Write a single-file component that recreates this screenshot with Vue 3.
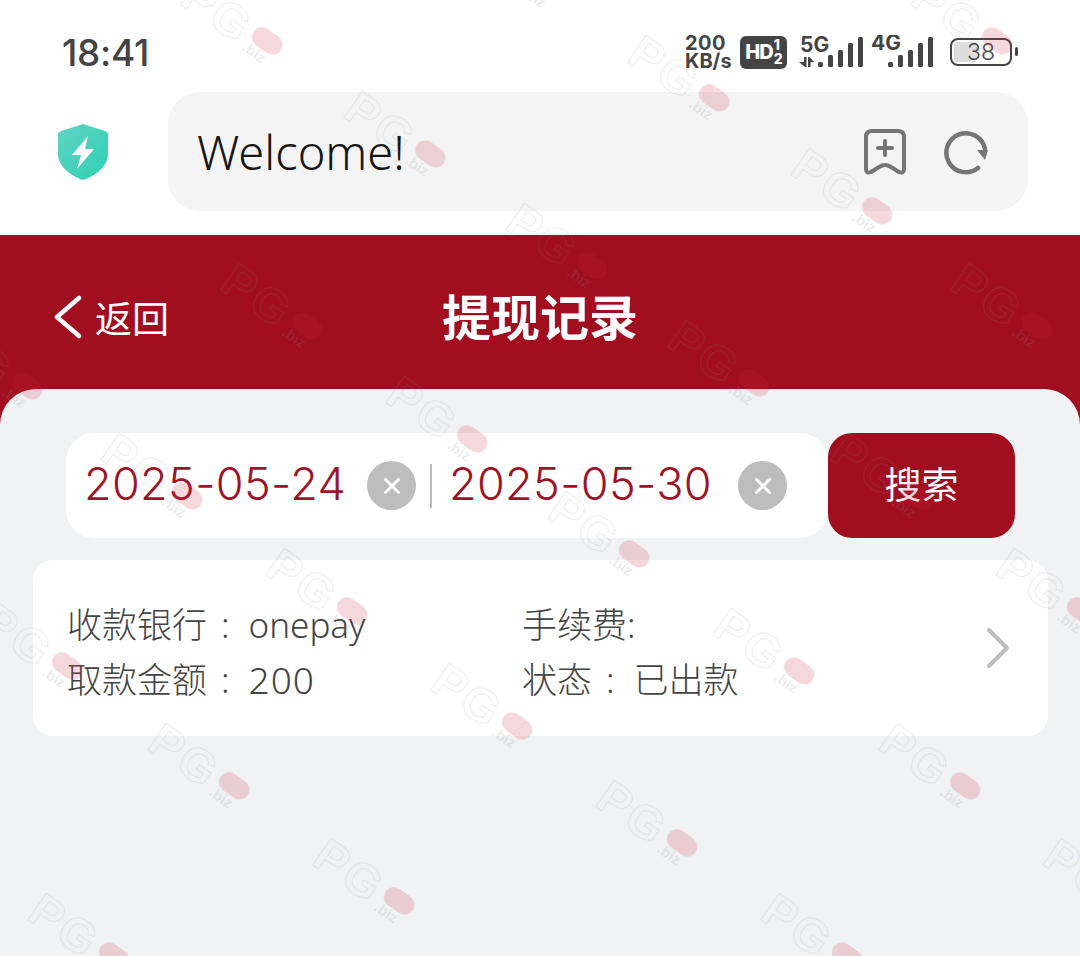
<script setup>
import { ref } from 'vue';

const startDate = ref('2025-05-24');
const endDate = ref('2025-05-30');

// top-left of the repeated screenshot-tool watermark
const marks = [
  [200, 0], [647, 57], [363, 113], [810, 170], [525, 225], [930, 0], [480, -55],
  [240, 285], [970, 285], [687, 342], [405, 398], [120, 455], [850, 455], [-40, 345],
  [567, 513], [285, 570], [1015, 570], [0, 625], [732, 630], [450, 685],
  [167, 745], [898, 745], [615, 802], [332, 860], [1062, 860], [47, 915], [780, 915],
];

const markStyle = (m) => ({ left: m[0] + 'px', top: m[1] + 'px' });

const bars = [
  { x: 0, h: 5 }, { x: 10, h: 12 }, { x: 20, h: 17 }, { x: 30, h: 24 }, { x: 40, h: 30 },
];
</script>

<template>
  <div class="screen">
    <div class="status-bar">
      <span class="time">18:41</span>
      <div class="status-icons">
        <div class="speed"><span>200</span><span>KB/s</span></div>
        <div class="hd">HD<span class="hd-sub"><i>1</i><i>2</i></span></div>
        <svg class="signal-five" width="66" height="34" viewBox="0 0 66 34">
          <text x="2" y="17" class="net">5G</text>
          <path d="M6 22 H8.500 V32 H7 L1 27 H6 Z M10 22 H11.500 L16 27 H12.500 V32 H10 Z" fill="#444" />
          <g transform="translate(20 2)">
            <rect v-for="b in bars" :key="b.x" :x="b.x" :y="30 - b.h" width="5" :height="b.h" rx="1.5" fill="#444" />
          </g>
        </svg>
        <svg class="signal-four" width="64" height="34" viewBox="0 0 64 34">
          <text x="0" y="15" class="net">4G</text>
          <g transform="translate(17 2)">
            <rect v-for="b in bars" :key="b.x" :x="b.x" :y="30 - b.h" width="5" :height="b.h" rx="1.5" fill="#444" />
          </g>
        </svg>
        <div class="battery">
          <div class="battery-level"></div>
          <span class="battery-num">38</span>
          <div class="battery-nub"></div>
        </div>
      </div>
    </div>

    <div class="toolbar">
      <svg class="shield" width="50" height="56" viewBox="0 0 50 56">
        <defs>
          <linearGradient id="shieldFill" x1="0" y1="0" x2="1" y2="1">
            <stop offset="0" stop-color="#62d3c3" />
            <stop offset="1" stop-color="#2fd0b4" />
          </linearGradient>
        </defs>
        <path d="M25 0 L47 7 Q50 8 50 11 V30 C50 42 38 51 27 55.500 Q25 56 23 55.500 C12 51 0 42 0 30 V11 Q0 8 3 7 Z" fill="url(#shieldFill)" />
        <path d="M30 12 L14 31 H23 L19 45 L36 25 H27 Z" fill="#fff" />
      </svg>
      <div class="url-pill">
        <span class="url-text">Welcome!</span>
        <div class="url-actions">
          <svg width="42" height="46" viewBox="0 0 42 46" fill="none" stroke="#757575" stroke-width="4" stroke-linecap="round" stroke-linejoin="round">
            <path d="M2 8 Q2 2 8 2 H34 Q40 2 40 8 V40 Q40 45 35 43 L27 38 Q21 34 15 38 L7 43 Q2 45 2 40 Z" />
            <path d="M21 12 V26 M14 19 H28" />
          </svg>
          <svg width="46" height="46" viewBox="0 0 46 46" fill="none">
            <path d="M41 20 A19.500 19.500 0 1 0 34 39" stroke="#757575" stroke-width="4.500" stroke-linecap="round" />
            <path d="M33 21 H44 L41 31 Z" fill="#757575" />
          </svg>
        </div>
      </div>
    </div>

    <div class="page">
      <div class="nav">
        <div class="back">
          <svg width="28" height="44" viewBox="0 0 28 44" fill="none" stroke="#fff" stroke-width="4.500" stroke-linecap="round" stroke-linejoin="round">
            <path d="M25 3 L3 22 L25 41" />
          </svg>
          <span>返回</span>
        </div>
        <h1 class="title">提现记录</h1>
        <div></div>
      </div>

      <div class="content">
        <div class="search-row">
          <div class="date-box">
            <span class="date">{{ startDate }}</span>
            <span class="clear">
              <svg width="20" height="20" viewBox="0 0 20 20" stroke="#fff" stroke-width="3" stroke-linecap="round"><path d="M3.500 3.500 L16.500 16.500 M16.500 3.500 L3.500 16.500" /></svg>
            </span>
            <span class="divider"></span>
            <span class="date">{{ endDate }}</span>
            <span class="clear">
              <svg width="20" height="20" viewBox="0 0 20 20" stroke="#fff" stroke-width="3" stroke-linecap="round"><path d="M3.500 3.500 L16.500 16.500 M16.500 3.500 L3.500 16.500" /></svg>
            </span>
          </div>
          <button class="search-btn"><span>搜索</span></button>
        </div>

        <div class="record">
          <div class="record-grid">
            <div class="cell"><span>收款银行</span><span class="colon">:</span><span>onepay</span></div>
            <div class="cell"><span>手续费</span><span>:</span></div>
            <div class="cell"><span>取款金额</span><span class="colon">:</span><span class="num">200</span></div>
            <div class="cell"><span>状态</span><span class="colon">:</span><span>已出款</span></div>
          </div>
          <svg width="24" height="42" viewBox="0 0 24 42" fill="none" stroke="#bdbdbd" stroke-width="4" stroke-linecap="round" stroke-linejoin="round">
            <path d="M3 3 L21 21 L3 39" />
          </svg>
        </div>
      </div>
    </div>

    <div class="watermarks">
      <div v-for="(m, i) in marks" :key="i" class="mark" :style="markStyle(m)">
        <span class="mark-pill"></span>
        <span class="mark-pg">PG</span>
        <span class="mark-biz">.biz</span>
      </div>
    </div>
  </div>
</template>

<style scoped>
.screen {
  position: relative;
  width: 1080px;
  height: 956px;
  overflow: hidden;
  background: #fff;
  font-family: "Noto Sans", "Noto Sans CJK SC", sans-serif;
}

.status-bar {
  display: flex;
  justify-content: space-between;
  align-items: center;
  height: 92px;
  padding: 10px 62px 0;
  box-sizing: border-box;
}

.time {
  font-family: "Inter", sans-serif;
  font-size: 37px;
  font-weight: 500;
  color: #444;
  letter-spacing: -0.3px;
  margin-top: 2px;
}

.status-icons {
  display: flex;
  align-items: center;
  margin-top: 2px;
  color: #444;
}

.speed {
  display: flex;
  flex-direction: column;
  font-family: "Inter", sans-serif;
  font-size: 20px;
  font-weight: 700;
  line-height: 18px;
  width: 50px;
  padding-left: 2px;
  box-sizing: border-box;
  align-items: flex-start;
}

.speed span:first-child {
  letter-spacing: 0.5px;
}

.hd {
  display: flex;
  align-items: center;
  justify-content: center;
  margin-left: 7px;
  width: 47px;
  height: 33px;
  border-radius: 6px;
  background: #444;
  color: #fff;
  font-family: "Inter", sans-serif;
  font-size: 20px;
  font-weight: 800;
  letter-spacing: -1px;
}

.hd-sub {
  display: flex;
  flex-direction: column;
  font-size: 14px;
  line-height: 14px;
  margin-left: 1px;
}

.hd-sub i {
  font-style: normal;
}

.signal-five {
  margin-left: 11px;
}

.signal-four {
  margin-left: 7px;
}

.net {
  font-family: "Inter", sans-serif;
  font-size: 21px;
  font-weight: 700;
  fill: #444;
}

.battery {
  position: relative;
  display: flex;
  align-items: center;
  justify-content: center;
  margin-left: 15px;
  margin-right: 6px;
  width: 62px;
  height: 28px;
  box-sizing: border-box;
  border: 2.5px solid #444;
  border-radius: 8px;
}

.battery-level {
  position: absolute;
  left: 2px;
  top: 2px;
  bottom: 2px;
  width: 23px;
  border-radius: 3px;
  background: #ddd;
}

.battery-num {
  position: relative;
  font-family: "Inter", sans-serif;
  font-size: 23px;
  font-weight: 300;
  color: #444;
  line-height: 1;
}

.battery-nub {
  position: absolute;
  right: -8px;
  top: 7px;
  width: 3px;
  height: 9px;
  border-radius: 2px;
  background: #444;
}

.toolbar {
  display: flex;
  align-items: center;
  height: 119px;
  padding: 0 52px 0 58px;
  margin-bottom: 24px;
}

.shield {
  margin-right: 60px;
  flex: none;
}

.url-pill {
  display: flex;
  flex: 1;
  align-items: center;
  justify-content: space-between;
  height: 119px;
  padding: 0 38px 0 29px;
  border-radius: 32px;
  background: #f4f4f5;
}

.url-text {
  font-size: 47px;
  font-weight: 300;
  color: #161616;
}

.url-actions {
  display: flex;
  align-items: center;
  gap: 38px;
}

.page {
  background: #a00e20;
  height: 721px;
}

.nav {
  display: grid;
  grid-template-columns: 1fr auto 1fr;
  align-items: center;
  height: 154px;
  padding: 4px 54px 0;
  box-sizing: border-box;
  color: #fff;
}

.back {
  display: flex;
  align-items: center;
  gap: 13px;
  margin-top: 6px;
  font-size: 37px;
  font-weight: 400;
}

.title {
  margin: 0;
  font-size: 49px;
  font-weight: 700;
}

.content {
  height: 567px;
  padding: 44px 32px 0 33px;
  box-sizing: border-box;
  border-radius: 36px 36px 0 0;
  background: #f1f2f4;
}

.search-row {
  display: flex;
  margin: 0 33px;
  height: 105px;
}

.date-box {
  display: flex;
  align-items: center;
  width: 762px;
  box-sizing: border-box;
  padding-left: 18px;
  border-radius: 28px;
  background: #fff;
}

.date {
  width: 260px;
  margin-bottom: 4px;
  font-family: "Inter", sans-serif;
  font-size: 45px;
  font-weight: 350;
  letter-spacing: 0.35px;
  color: #9d1429;
  white-space: nowrap;
}

.clear {
  display: flex;
  align-items: center;
  justify-content: center;
  width: 49px;
  height: 49px;
  margin-left: 23px;
  border-radius: 50%;
  background: #bdbdbd;
}

.divider {
  width: 2px;
  height: 44px;
  margin: 0 17px 0 14px;
  background: #bcbcbc;
}

.divider + .date + .clear {
  margin-left: 29px;
}

.search-btn {
  width: 187px;
  height: 105px;
  padding: 0 0 5px;
  border: none;
  border-radius: 24px;
  background: #a00e20;
  color: #fff;
  font-family: "Noto Sans CJK SC", sans-serif;
  font-size: 37px;
}

.record {
  display: flex;
  align-items: center;
  justify-content: space-between;
  height: 176px;
  margin-top: 22px;
  padding: 0 38px 0 34px;
  border-radius: 20px;
  background: #fff;
}

.record-grid {
  display: grid;
  grid-template-columns: 455px 1fr;
  row-gap: 8px;
  padding-top: 8px;
  font-size: 35px;
  font-weight: 300;
  color: #444;
  line-height: 47px;
}

.cell {
  display: flex;
  white-space: nowrap;
}

.colon {
  margin: 0 19px 0 14px;
}

.num {
  font-size: 37px;
  letter-spacing: 1px;
}

.watermarks {
  position: absolute;
  inset: 0;
  pointer-events: none;
}

.mark {
  position: absolute;
  width: 0;
  height: 0;
  transform: rotate(35deg);
  transform-origin: top left;
}

.mark-pg {
  position: absolute;
  left: -16px;
  top: -25px;
  font-family: "Liberation Sans", sans-serif;
  font-size: 47px;
  font-weight: 700;
  line-height: 1;
  letter-spacing: 3px;
  color: transparent;
  -webkit-text-stroke: 1.5px rgba(140, 140, 140, 0.13);
}

.mark-pill {
  position: absolute;
  left: 62px;
  top: -15px;
  width: 33px;
  height: 20px;
  border-radius: 10px;
  background: rgba(200, 40, 60, 0.18);
  filter: blur(0.6px);
}

.mark-biz {
  position: absolute;
  left: 62px;
  top: 4px;
  font-family: "Liberation Sans", sans-serif;
  font-size: 15px;
  font-weight: 700;
  line-height: 1;
  color: rgba(140, 140, 140, 0.18);
}
</style>
